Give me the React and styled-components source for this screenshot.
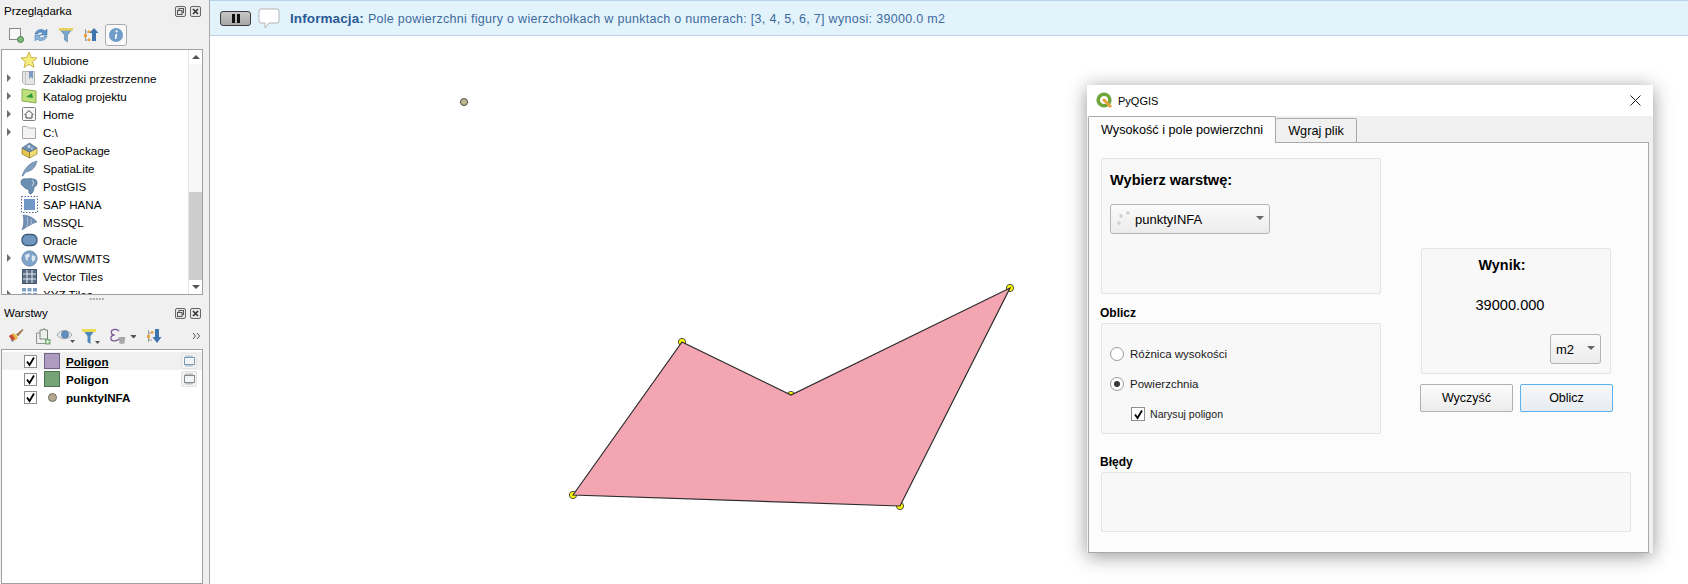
import React from 'react';
import styled, {createGlobalStyle} from "styled-components";

const Global = createGlobalStyle`
  html, body {
    margin: 0;
    padding: 0;
    background: #fff;
    overflow: hidden;
  }
  * {
    box-sizing: border-box;
  }
`;

const Page = styled.div`
  width: 1688px;
  height: 584px;
  display: flex;
  overflow: hidden;
  font-family: "Liberation Sans", Arial, sans-serif;
  font-size: 11.6px;
  color: #000;
`;

const Sidebar = styled.div`
  width: 210px;
  height: 100%;
  flex: none;
  display: flex;
  flex-direction: column;
  background: #f0f0f0;
  border-right: 1px solid #a9a9a9;
`;

const PanelHeader = styled.div`
  height: 21px;
  flex: none;
  padding: 1px 7px 0 4px;
  display: flex;
  align-items: center;
  justify-content: space-between;
  font-size: 11.5px;
`;

const HeaderButtons = styled.div`
  display: flex;
  gap: 4px;
  margin-right: 1px;
`;

const Toolbar = styled.div`
  height: ${p => p.$height}px;
  flex: none;
  padding-left: ${p => p.$left}px;
  display: flex;
  align-items: center;
  gap: ${p => p.$gap}px;
`;

const ToolButton = styled.div`
  width: ${p => p.$width || 22}px;
  height: 22px;
  flex: none;
  display: flex;
  align-items: center;
  justify-content: center;
  border-radius: 3px;
  background: ${p => p.$active ? "#fafafa" : "transparent"};
  border: 1px solid ${p => p.$active ? "#adadad" : "transparent"};
  margin-left: ${p => p.$push || 0}px;
`;

const Tree = styled.div`
  margin: 0 6px 0 1px;
  border: 1px solid #a0a0a0;
  background: #fff;
  position: relative;
  overflow: hidden;
  flex: ${p => p.$grow ? "1" : "none"};
  height: ${p => p.$height ? p.$height + "px" : "auto"};
  display: flex;
`;

const TreeList = styled.div`
  flex: 1;
  min-width: 0;
  padding-top: ${p => p.$top}px;
`;

const BrowserRow = styled.div`
  height: 18px;
  display: flex;
  align-items: center;
`;

const Arrow = styled.span`
  width: 0;
  height: 0;
  flex: none;
  margin: 0 9px 0 5px;
  border-left: 4px solid ${p => p.$hidden ? "transparent" : "#6d6d6d"};
  border-top: 4px solid transparent;
  border-bottom: 4px solid transparent;
`;

const RowIcon = styled.span`
  width: 18px;
  height: 18px;
  flex: none;
  display: flex;
  align-items: center;
  justify-content: center;
  margin-right: 5px;
`;

const Scrollbar = styled.div`
  width: 14px;
  flex: none;
  display: flex;
  flex-direction: column;
  background: #f4f4f4;
  border-left: 1px solid #e6e6e6;
`;

const ScrollButton = styled.div`
  height: 14px;
  flex: none;
  display: flex;
  align-items: center;
  justify-content: center;
  background: #fff;
  &::before {
    content: "";
    border-left: 4px solid transparent;
    border-right: 4px solid transparent;
    border-${p => p.$down ? "top" : "bottom"}: 4px solid #555;
  }
`;

const ScrollTrack = styled.div`
  flex: ${p => p.$grow};
  background: ${p => p.$thumb ? "#cdcdcd" : "#f7f7f7"};
`;

const Grip = styled.div`
  height: 7px;
  flex: none;
  display: flex;
  justify-content: center;
  align-items: center;
  padding-right: 15px;
  color: #a0a0a0;
  font-size: 7px;
  letter-spacing: 0.5px;
  line-height: 7px;
`;

const LayerRow = styled.div`
  height: 18px;
  display: flex;
  align-items: center;
  padding-left: 22px;
  background: ${p => p.$selected ? "#f0f0f0" : "transparent"};
  font-weight: bold;
`;

const Check = styled.span`
  width: 13px;
  height: 13px;
  flex: none;
  border: 1px solid #8f8f8f;
  background: #fff;
  display: flex;
  align-items: center;
  justify-content: center;
`;

const Swatch = styled.span`
  width: 16px;
  height: 16px;
  flex: none;
  margin-left: 7px;
  background: ${p => p.$color};
  border: 1px solid ${p => p.$edge};
`;

const PointDot = styled.span`
  width: 16px;
  height: 16px;
  flex: none;
  margin-left: 7px;
  display: flex;
  align-items: center;
  justify-content: center;
  &::before {
    content: "";
    width: 7px;
    height: 7px;
    border-radius: 50%;
    background: #b5a88c;
    border: 1px solid #6a6a5c;
  }
`;

const LayerName = styled.span`
  margin-left: 6px;
  flex: 1;
  text-decoration: ${p => p.$underline ? "underline" : "none"};
`;

const Indicator = styled.span`
  width: 16px;
  height: 16px;
  flex: none;
  margin-right: 5px;
  display: flex;
  align-items: center;
  justify-content: center;
  background: #f4f4f4;
  border: 1px solid #e2e2e2;
  border-radius: 2px;
`;

const Main = styled.div`
  flex: 1;
  min-width: 0;
  position: relative;
  display: flex;
  flex-direction: column;
`;

const MessageBar = styled.div`
  height: 36px;
  flex: none;
  display: flex;
  align-items: center;
  padding-left: 10px;
  background: #e3f3fc;
  border-top: 1px solid #b7d3e8;
  border-bottom: 1px solid #b7d3e8;
`;

const PauseButton = styled.div`
  width: 31px;
  height: 15px;
  flex: none;
  display: flex;
  align-items: center;
  justify-content: center;
  gap: 2px;
  background: linear-gradient(#c6c6c6, #a8a8a8);
  border: 1px solid #3c3c3c;
  border-radius: 3px;
  &::before, &::after {
    content: "";
    width: 3px;
    height: 9px;
    background: #111;
  }
`;

const MessageText = styled.div`
  margin-left: 10px;
  color: #3d6a9c;
  font-size: 12.5px;
  letter-spacing: 0.3px;
  white-space: nowrap;
  b {
    color: #2a5a94;
    font-size: 13.5px;
    letter-spacing: 0.1px;
    margin-right: 4px;
  }
`;

const Canvas = styled.div`
  flex: 1;
  background: #fff;
  position: relative;
`;

const Dialog = styled.div`
  position: absolute;
  left: 877px;
  top: 85px;
  width: 566px;
  height: 468px;
  display: flex;
  flex-direction: column;
  background: #f0f0f0;
  box-shadow: 0 3px 18px rgba(0, 0, 0, 0.42);
  font-size: 13px;
`;

const TitleBar = styled.div`
  height: 31px;
  flex: none;
  display: flex;
  align-items: center;
  padding: 0 11px 0 9px;
  background: #fff;
  font-size: 11px;
`;

const TitleText = styled.span`
  margin-left: 5px;
  flex: 1;
`;

const TabBar = styled.div`
  height: 27px;
  flex: none;
  display: flex;
  align-items: flex-end;
  margin: 0 4px 0 1px;
  border-bottom: 1px solid #a9a9a9;
`;

const Tab = styled.div`
  width: ${p => p.$width}px;
  height: ${p => p.$active ? 27 : 25}px;
  display: flex;
  align-items: center;
  justify-content: center;
  background: ${p => p.$active ? "#fcfcfc" : "#f0f0f0"};
  border: 1px solid #a9a9a9;
  border-bottom: ${p => p.$active ? "none" : "1px solid #a9a9a9"};
  border-left-width: ${p => p.$active ? 1 : 0}px;
  border-radius: 2px 2px 0 0;
  margin-bottom: -1px;
  position: relative;
  font-size: 12.7px;
`;

const Pane = styled.div`
  flex: 1;
  margin: 0 4px 0 1px;
  padding: 15px 17px 18px 12px;
  background: #fcfcfc;
  border: 1px solid #a9a9a9;
  border-top: none;
  display: flex;
  flex-direction: column;
`;

const TopRow = styled.div`
  display: flex;
  align-items: flex-start;
`;

const LeftColumn = styled.div`
  width: 280px;
  flex: none;
  display: flex;
  flex-direction: column;
`;

const RightColumn = styled.div`
  width: 193px;
  flex: none;
  margin: 90px 0 0 39px;
  display: flex;
  flex-direction: column;
`;

const GroupBox = styled.div`
  height: ${p => p.$height}px;
  flex: none;
  background: #f8f8f8;
  border: 1px solid #e4e4e4;
  border-radius: 2px;
`;

const LayerBox = styled(GroupBox)`
  padding: 11px 8px 0;
`;

const ChoiceBox = styled(GroupBox)`
  padding-top: 21px;
  display: flex;
  flex-direction: column;
  gap: 12px;
`;

const ChooseTitle = styled.div`
  font-size: 14.6px;
  font-weight: bold;
  height: 20px;
  line-height: 20px;
`;

const Combo = styled.div`
  width: ${p => p.$width}px;
  height: 30px;
  display: flex;
  align-items: center;
  margin-top: ${p => p.$top || 0}px;
  padding-left: 5px;
  background: linear-gradient(#fbfbfb, #ececec);
  border: 1px solid #b4b4b4;
  border-radius: 3px;
  position: relative;
  font-size: 13px;
  &::after {
    content: "";
    position: absolute;
    right: 5px;
    top: 11px;
    border-left: 4px solid transparent;
    border-right: 4px solid transparent;
    border-top: 4px solid #666;
  }
`;

const ComboLabel = styled.span`
  margin-left: 2px;
`;

const ComboWrap = styled.div`
  display: flex;
  justify-content: flex-end;
  margin-top: 19px;
  padding-right: 9px;
`;

const SectionLabel = styled.div`
  height: 16px;
  line-height: 16px;
  margin: ${p => p.$top}px 0 2px -1px;
  font-size: 12px;
  font-weight: bold;
`;

const ChoiceRow = styled.div`
  height: 18px;
  display: flex;
  align-items: center;
  padding-left: ${p => p.$indent}px;
  font-size: ${p => p.$size}px;
  color: #1a1a1a;
`;

const Radio = styled.span`
  width: 14px;
  height: 14px;
  flex: none;
  margin-right: 6px;
  border-radius: 50%;
  border: 1px solid #9a9a9a;
  background: #fff;
  display: flex;
  align-items: center;
  justify-content: center;
  &::before {
    content: "";
    width: 6px;
    height: 6px;
    border-radius: 50%;
    background: ${p => p.$on ? "#3a3a3a" : "transparent"};
  }
`;

const SmallCheck = styled(Check)`
  width: 14px;
  height: 14px;
  margin-right: 5px;
`;

const ResultBox = styled(GroupBox)`
  width: 190px;
  margin-left: 1px;
  padding-top: 7px;
`;

const ResultTitle = styled.div`
  height: 18px;
  line-height: 18px;
  padding-right: 28px;
  text-align: center;
  font-size: 14.4px;
  font-weight: bold;
`;

const ResultValue = styled.div`
  margin-top: 21px;
  height: 20px;
  line-height: 20px;
  padding-right: 12px;
  text-align: center;
  font-size: 14.6px;
`;

const Buttons = styled.div`
  margin-top: 10px;
  display: flex;
  gap: 7px;
`;

const Button = styled.div`
  width: 93px;
  height: 28px;
  display: flex;
  align-items: center;
  justify-content: center;
  font-size: 12.5px;
  border-radius: 2px;
  border: 1px solid ${p => p.$focus ? "#5cb2ee" : "#b0b0b0"};
  background: ${p => p.$focus ? "linear-gradient(#f7f9fb, #e6ebf0)" : "linear-gradient(#fcfcfc, #ececec)"};
`;

const ErrorBox = styled(GroupBox)`
  width: 530px;
`;

const CloseX = () => (
    <svg width="13" height="13" viewBox="0 0 13 13">
        <path d="M1.5 1.5 L11.5 11.5 M11.5 1.5 L1.5 11.5" stroke="#222" strokeWidth="1" fill="none"/>
    </svg>
);

const DockFloat = () => (
    <svg width="11" height="11" viewBox="0 0 11 11">
        <rect x=".5" y=".5" width="10" height="10" rx="1.5" fill="#e6e6e6" stroke="#666"/>
        <rect x="4" y="2.5" width="4.5" height="4" fill="none" stroke="#555"/>
        <rect x="2.5" y="4.5" width="4.5" height="4" fill="#e6e6e6" stroke="#555"/>
    </svg>
);

const DockClose = () => (
    <svg width="11" height="11" viewBox="0 0 11 11">
        <rect x=".5" y=".5" width="10" height="10" rx="1.5" fill="#e6e6e6" stroke="#666"/>
        <path d="M3 3 L8 8 M8 3 L3 8" stroke="#333" strokeWidth="1.6"/>
    </svg>
);

const HeaderTools = () => (
    <HeaderButtons>
        <DockFloat/>
        <DockClose/>
    </HeaderButtons>
);

const AddIcon = () => (
    <svg width="16" height="16" viewBox="0 0 16 16">
        <rect x="1.5" y="1.5" width="11" height="11" fill="#f8f8f8" stroke="#8a8a8a"/>
        <circle cx="12.5" cy="12.5" r="3" fill="#7fb87f" stroke="#4d7f4d"/>
    </svg>
);

const RefreshIcon = () => (
    <svg width="16" height="16" viewBox="0 0 16 16">
        <path d="M2 7 C3 2.5 9 1 12 4 L14 2 V8 H8 L10 6 C8.5 4.5 5.5 5 4.5 7 Z" fill="#5b92c8" stroke="#3e72a8" strokeWidth=".5"/>
        <path d="M14 9 C13 13.5 7 15 4 12 L2 14 V8 H8 L6 10 C7.5 11.5 10.5 11 11.5 9 Z" fill="#8ab4dc" stroke="#3e72a8" strokeWidth=".5"/>
    </svg>
);

const FilterIcon = () => (
    <svg width="16" height="16" viewBox="0 0 16 16">
        <path d="M1 1.5 H15 L9.5 8 V15 L6.5 13 V8 Z" fill="#7ba4c9" stroke="#5a86ad" strokeWidth=".6"/>
        <rect x="1" y="1" width="14" height="2.6" fill="#e9d25a"/>
    </svg>
);

const CollapseIcon = () => (
    <svg width="16" height="16" viewBox="0 0 16 16">
        <path d="M2.5 2 V14 M2.5 5 H6 M2.5 13 H6" stroke="#999" fill="none"/>
        <rect x="1" y="7" width="3" height="3" fill="#e8a33d"/>
        <rect x="5" y="3.5" width="2.5" height="2.5" fill="#e8a33d"/>
        <rect x="5" y="11.5" width="2.5" height="2.5" fill="#e8a33d"/>
        <path d="M11 1 L15.5 6 H13 V14 H9 V6 H6.5 Z" fill="#3f74ad"/>
    </svg>
);

const InfoIcon = () => (
    <svg width="16" height="16" viewBox="0 0 16 16">
        <circle cx="8" cy="8" r="7" fill="#6f9cc9"/>
        <circle cx="8.6" cy="4.4" r="1.1" fill="#fff"/>
        <path d="M7.4 7 H9.3 L8.4 12 H6.9 Z" fill="#fff"/>
    </svg>
);

const StarIcon = () => (
    <svg width="18" height="18" viewBox="0 0 18 18">
        <path d="M9 1 L11.3 6.5 L17 7 L12.6 10.7 L14 16.5 L9 13.4 L4 16.5 L5.4 10.7 L1 7 L6.7 6.5 Z" fill="#f6ec7f" stroke="#c9b64a"/>
    </svg>
);

const BookmarkIcon = () => (
    <svg width="16" height="16" viewBox="0 0 16 16">
        <path d="M1.5 1.5 H13.5 V14.5 H4 L1.5 12 Z" fill="#e5e5e5" stroke="#b5b5b5"/>
        <path d="M4.5 1.5 V14" stroke="#c4c4c4"/>
        <path d="M8 1 H12 V9 L10 7 L8 9 Z" fill="#7d9dc0"/>
    </svg>
);

const ProjectIcon = () => (
    <svg width="16" height="16" viewBox="0 0 16 16">
        <path d="M1 1 L15 3 V15 L1 13 Z" fill="#bfdf7a" stroke="#8cae58"/>
        <path d="M5 9 L11 5 L12 10 Z" fill="#2a9a3c"/>
    </svg>
);

const HomeIcon = () => (
    <svg width="16" height="16" viewBox="0 0 16 16">
        <rect x="1.5" y="1.5" width="13" height="13" rx="1" fill="#f7f7f7" stroke="#7f7f7f"/>
        <path d="M3.5 9 L8 4.5 L12.5 9 M5 8.5 V12 H11 V8.5" fill="none" stroke="#444"/>
    </svg>
);

const FolderIcon = () => (
    <svg width="16" height="16" viewBox="0 0 16 16">
        <path d="M1.5 2.5 H6 L7.5 4 H14.5 V14.5 H1.5 Z" fill="#f3f3f3" stroke="#a8a8a8"/>
    </svg>
);

const GeoPackageIcon = () => (
    <svg width="17" height="17" viewBox="0 0 17 17">
        <path d="M1 6 L8.5 10 V16 L1 12 Z" fill="#e3c44c" stroke="#7c6a24" strokeWidth=".6"/>
        <path d="M16 6 L8.5 10 V16 L16 12 Z" fill="#f3dc72" stroke="#7c6a24" strokeWidth=".6"/>
        <path d="M8.5 1 L16 6 L8.5 10 L1 6 Z" fill="#6f8fb3" stroke="#3f5c7f" strokeWidth=".6"/>
        <circle cx="8" cy="4.5" r="1.5" fill="#cfe0ee"/>
        <circle cx="11" cy="6.5" r="1" fill="#cfe0ee"/>
    </svg>
);

const FeatherIcon = () => (
    <svg width="17" height="17" viewBox="0 0 17 17">
        <path d="M1 16 C3 9 9 2 16 1 C15 6 12 11 5 12 C4 13 3 14 2 16 Z" fill="#7f9dbd" stroke="#4f6f92" strokeWidth=".5"/>
    </svg>
);

const ElephantIcon = () => (
    <svg width="18" height="17" viewBox="0 0 18 17">
        <path d="M1 4 C1 1 4 .5 6 1 C8 .5 11 0 13 1 C16 1 17.5 3 17 6 C16.5 8 15 9 14 9 C14 12 13 15 11 16 C9.5 16.5 8.5 15 9 12 C7 11 4 10 3 8 C1.5 7.5 1 6 1 4 Z" fill="#6d8fb3" stroke="#3f5f82" strokeWidth=".6"/>
        <path d="M12 2 C14 3 14 6 12 8" stroke="#dbe6f1" fill="none"/>
    </svg>
);

const HanaIcon = () => (
    <svg width="17" height="17" viewBox="0 0 17 17">
        <rect x=".5" y=".5" width="16" height="16" fill="none" stroke="#50688a" strokeDasharray="1.5 1.5"/>
        <rect x="3" y="3" width="11" height="11" fill="#6f98c6"/>
    </svg>
);

const MssqlIcon = () => (
    <svg width="17" height="17" viewBox="0 0 17 17">
        <path d="M2 1 C7 1 13 4 16 8 C12 9 7 12 1 16 C3 11 3 6 2 1 Z" fill="#6f8fb3" stroke="#4c6a8c" strokeWidth=".5"/>
        <path d="M6 3 C7 7 7 10 5.5 13 M10 5 C10.5 7 10.5 8.5 9.5 10.5" stroke="#cdddeb" fill="none" strokeWidth=".7"/>
    </svg>
);

const OracleIcon = () => (
    <svg width="17" height="14" viewBox="0 0 17 14">
        <rect x="1" y="1.5" width="15" height="11" rx="5" fill="#7096c0" stroke="#3d5878" strokeWidth="1.3"/>
    </svg>
);

const GlobeIcon = () => (
    <svg width="17" height="17" viewBox="0 0 17 17">
        <circle cx="8.5" cy="8.5" r="7.7" fill="#7fa3c9" stroke="#58799c" strokeWidth=".6"/>
        <path d="M4 5 L8 3.5 L9 6 L6.5 8 L7 11 L5 10 Z M11 5 L14.5 6.5 L14 10 L11.5 12 L10.5 8.5 Z" fill="#dfe9f3"/>
    </svg>
);

const VectorTilesIcon = () => (
    <svg width="15" height="15" viewBox="0 0 15 15">
        <rect x=".5" y=".5" width="14" height="14" fill="#5b6f87" stroke="#44566d"/>
        <path d="M5 1 V14 M10 1 V14 M1 5 H14 M1 10 H14" stroke="#e8edf2" strokeWidth="1"/>
    </svg>
);

const XyzTilesIcon = () => (
    <svg width="15" height="15" viewBox="0 0 15 15">
        <path d="M0 1 H4 V4.5 H0 Z M5.5 1 H9.5 V4.5 H5.5 Z M11 1 H15 V4.5 H11 Z M0 6 H4 V9.5 H0 Z M5.5 6 H9.5 V9.5 H5.5 Z M11 6 H15 V9.5 H11 Z" fill="#7f9fc4"/>
    </svg>
);

const BrushIcon = () => (
    <svg width="16" height="16" viewBox="0 0 16 16">
        <path d="M1 8 L6 5 L10 10 L6 13 Z" fill="#e9b23e"/>
        <path d="M1 8 L4 6.3 L7 11 L4 13 Z" fill="#c9483a"/>
        <path d="M3 11 L6 13 L4 14 Z" fill="#5d7fb0"/>
        <path d="M8 6.5 L14.5 1 L15.5 2 L10 8.5 Z" fill="#9c7a4c"/>
    </svg>
);

const AddGroupIcon = () => (
    <svg width="20" height="17" viewBox="-4 0 20 17">
        <path d="M5 5 H1.5 V15.5 H11 V12" fill="none" stroke="#8a9488"/>
        <path d="M5 2 H8 V1 H10 V2 H12.5 V11 H5 Z" fill="#eef0ee" stroke="#7a857a"/>
        <rect x="10" y="11" width="5.5" height="5.5" fill="#74b06f"/>
        <path d="M12.8 12 V15.5 M11 13.8 H14.5" stroke="#fff"/>
    </svg>
);

const EyeIcon = () => (
    <svg width="20" height="16" viewBox="0 0 20 16">
        <path d="M1 7 C5 1 12 1 16 7 C12 12 5 12 1 7 Z" fill="#e6e9ec" stroke="#9aa4ad"/>
        <circle cx="9" cy="6.5" r="3.5" fill="#5f8fc0" stroke="#41668c" strokeWidth=".6"/>
        <path d="M14 12 H19 L16.5 15 Z" fill="#555"/>
    </svg>
);

const FilterMenuIcon = () => (
    <svg width="20" height="17" viewBox="0 0 20 17">
        <path d="M1 1 H15 L9.5 8 V16 L6.5 14 V8 Z" fill="#4f86bb"/>
        <rect x="1" y="1" width="14" height="3" fill="#eadb55"/>
        <path d="M14 13 H19 L16.5 16 Z" fill="#555"/>
    </svg>
);

const EpsilonIcon = () => (
    <svg width="31" height="18" viewBox="-4 0 31 18">
        <path d="M9.5 4 C7 1 1.5 2 1.5 5 C1.5 7 3 8 5 8 C2.5 8 1 9 1 11.5 C1 14.5 7 15 9.5 12" fill="none" stroke="#7c5a96" strokeWidth="1.3"/>
        <path d="M9 10 H16 L15 17 H10 Z" fill="#a8a8a8"/>
        <path d="M21 8 H28 L24.5 11.5 Z" fill="#555"/>
    </svg>
);

const ExpandIcon = () => (
    <svg width="16" height="16" viewBox="0 0 16 16">
        <path d="M2.5 2 V14 M2.5 5 H6 M2.5 12 H6" stroke="#999" fill="none"/>
        <rect x="1" y="7" width="3" height="3" fill="#e8a33d"/>
        <rect x="5" y="3" width="2.5" height="2.5" fill="#e8a33d"/>
        <path d="M9 1 H13 V9 H15.5 L11 15 L6.5 9 H9 Z" fill="#3f74ad"/>
    </svg>
);

const MoreIcon = () => (
    <svg width="9" height="8" viewBox="0 0 9 8">
        <path d="M1 1 L3.5 4 L1 7 M5 1 L7.5 4 L5 7" fill="none" stroke="#555"/>
    </svg>
);

const MemoryIcon = ({color}) => (
    <svg width="13" height="12" viewBox="0 0 13 12">
        <rect x="1.5" y="2.5" width="10" height="7" fill="#f2f5f7" stroke={color}/>
        <path d="M3 .5 V2.5 M5 .5 V2.5 M7 .5 V2.5 M9 .5 V2.5 M3 9.5 V11.5 M5 9.5 V11.5 M7 9.5 V11.5 M9 9.5 V11.5" stroke={color}/>
    </svg>
);

const Tick = () => (
    <svg width="11" height="11" viewBox="0 0 11 11">
        <path d="M2 5.5 L4.5 9 L9 1.5" fill="none" stroke="#000" strokeWidth="1.8"/>
    </svg>
);

const SpeechIcon = () => (
    <svg width="22" height="21" viewBox="0 0 22 21" style={{marginLeft: 7, flex: "none"}}>
        <path d="M3 1 H19 Q21 1 21 3 V13 Q21 15 19 15 H11 L7 20 V15 H3 Q1 15 1 13 V3 Q1 1 3 1 Z" fill="#fff" stroke="#b4b4b4"/>
    </svg>
);

const QgisLogo = () => (
    <svg width="17" height="17" viewBox="0 0 17 17">
        <circle cx="8" cy="8" r="5.8" fill="none" stroke="#6fa53a" strokeWidth="3.6"/>
        <path d="M8 8 L15 15" stroke="#e6a33a" strokeWidth="3"/>
        <circle cx="8" cy="8" r="1.6" fill="#e6a33a"/>
    </svg>
);

const PointsIcon = () => (
    <svg width="17" height="16" viewBox="0 0 17 16">
        <circle cx="3" cy="12" r="1.3" fill="#e4e4e4" stroke="#aaa" strokeWidth=".5"/>
        <circle cx="5" cy="5" r="1.3" fill="#e4e4e4" stroke="#aaa" strokeWidth=".5"/>
        <circle cx="12" cy="2" r="1.3" fill="#e4e4e4" stroke="#aaa" strokeWidth=".5"/>
    </svg>
);

const browserItems = [
    {name: "Ulubione", icon: <StarIcon/>},
    {name: "Zakładki przestrzenne", icon: <BookmarkIcon/>, arrow: true},
    {name: "Katalog projektu", icon: <ProjectIcon/>, arrow: true},
    {name: "Home", icon: <HomeIcon/>, arrow: true},
    {name: "C:\\", icon: <FolderIcon/>, arrow: true},
    {name: "GeoPackage", icon: <GeoPackageIcon/>},
    {name: "SpatiaLite", icon: <FeatherIcon/>},
    {name: "PostGIS", icon: <ElephantIcon/>},
    {name: "SAP HANA", icon: <HanaIcon/>},
    {name: "MSSQL", icon: <MssqlIcon/>},
    {name: "Oracle", icon: <OracleIcon/>},
    {name: "WMS/WMTS", icon: <GlobeIcon/>, arrow: true},
    {name: "Vector Tiles", icon: <VectorTilesIcon/>},
    {name: "XYZ Tiles", icon: <XyzTilesIcon/>, arrow: true},
];

const vertices = [[573, 495], [682, 342], [791, 395], [1010, 288], [900, 506]];

// points lie under the polygon, so only a crescent of each one shows
const MapCanvas = () => (
    <svg width="1478" height="548" viewBox="210 36 1478 548" style={{display: "block"}}>
        {vertices.map(([x, y]) => (
            <circle key={x} cx={x} cy={y} r="3.6" fill="#ffff00" stroke="#4a4a4a" strokeWidth="1"/>
        ))}
        <polygon points={vertices.map(v => v.join(",")).join(" ")} fill="#f4a5b2" stroke="#2c2c2c" strokeWidth="1.2"/>
        <circle cx="464" cy="102" r="3.5" fill="#bdb794" stroke="#4a4a40" strokeWidth="1"/>
    </svg>
);

const App = () => {
    return (
        <Page>
            <Global/>
            <Sidebar>
                <PanelHeader>
                    <span>Przeglądarka</span>
                    <HeaderTools/>
                </PanelHeader>
                <Toolbar $height={28} $left={5} $gap={3}>
                    <ToolButton><AddIcon/></ToolButton>
                    <ToolButton><RefreshIcon/></ToolButton>
                    <ToolButton><FilterIcon/></ToolButton>
                    <ToolButton><CollapseIcon/></ToolButton>
                    <ToolButton $active><InfoIcon/></ToolButton>
                </Toolbar>
                <Tree $height={246}>
                    <TreeList $top={1}>
                        {browserItems.map(item => (
                            <BrowserRow key={item.name}>
                                <Arrow $hidden={!item.arrow}/>
                                <RowIcon>{item.icon}</RowIcon>
                                <span>{item.name}</span>
                            </BrowserRow>
                        ))}
                    </TreeList>
                    <Scrollbar>
                        <ScrollButton/>
                        <ScrollTrack $grow={127}/>
                        <ScrollTrack $grow={88} $thumb/>
                        <ScrollButton $down/>
                    </Scrollbar>
                </Tree>
                <Grip>•••••</Grip>
                <PanelHeader>
                    <span>Warstwy</span>
                    <HeaderTools/>
                </PanelHeader>
                <Toolbar $height={26} $left={5} $gap={3}>
                    <ToolButton><BrushIcon/></ToolButton>
                    <ToolButton><AddGroupIcon/></ToolButton>
                    <ToolButton><EyeIcon/></ToolButton>
                    <ToolButton><FilterMenuIcon/></ToolButton>
                    <ToolButton $width={32}><EpsilonIcon/></ToolButton>
                    <ToolButton $push={3}><ExpandIcon/></ToolButton>
                    <ToolButton $push={17}><MoreIcon/></ToolButton>
                </Toolbar>
                <Tree $grow>
                    <TreeList $top={2}>
                        <LayerRow $selected>
                            <Check><Tick/></Check>
                            <Swatch $color="#ad9cc0" $edge="#6f6487"/>
                            <LayerName $underline>Poligon</LayerName>
                            <Indicator><MemoryIcon color="#7f9db5"/></Indicator>
                        </LayerRow>
                        <LayerRow>
                            <Check><Tick/></Check>
                            <Swatch $color="#74a476" $edge="#4e7050"/>
                            <LayerName>Poligon</LayerName>
                            <Indicator><MemoryIcon color="#8a8a8a"/></Indicator>
                        </LayerRow>
                        <LayerRow>
                            <Check><Tick/></Check>
                            <PointDot/>
                            <LayerName>punktyINFA</LayerName>
                        </LayerRow>
                    </TreeList>
                </Tree>
            </Sidebar>
            <Main>
                <MessageBar>
                    <PauseButton/>
                    <SpeechIcon/>
                    <MessageText>
                        <b>Informacja:</b>
                        Pole powierzchni figury o wierzchołkach w punktach o numerach: [3, 4, 5, 6, 7] wynosi: 39000.0 m2
                    </MessageText>
                </MessageBar>
                <Canvas>
                    <MapCanvas/>
                </Canvas>
                <Dialog>
                    <TitleBar>
                        <QgisLogo/>
                        <TitleText>PyQGIS</TitleText>
                        <CloseX/>
                    </TitleBar>
                    <TabBar>
                        <Tab $active $width={188}>Wysokość i pole powierzchni</Tab>
                        <Tab $width={81}>Wgraj plik</Tab>
                    </TabBar>
                    <Pane>
                        <TopRow>
                            <LeftColumn>
                                <LayerBox $height={136}>
                                    <ChooseTitle>Wybierz warstwę:</ChooseTitle>
                                    <Combo $width={160} $top={14}>
                                        <PointsIcon/>
                                        <ComboLabel>punktyINFA</ComboLabel>
                                    </Combo>
                                </LayerBox>
                                <SectionLabel $top={11}>Oblicz</SectionLabel>
                                <ChoiceBox $height={111}>
                                    <ChoiceRow $indent={8} $size={11.5}>
                                        <Radio/>
                                        Różnica wysokości
                                    </ChoiceRow>
                                    <ChoiceRow $indent={8} $size={11.5}>
                                        <Radio $on/>
                                        Powierzchnia
                                    </ChoiceRow>
                                    <ChoiceRow $indent={29} $size={10.6}>
                                        <SmallCheck><Tick/></SmallCheck>
                                        Narysuj poligon
                                    </ChoiceRow>
                                </ChoiceBox>
                            </LeftColumn>
                            <RightColumn>
                                <ResultBox $height={126}>
                                    <ResultTitle>Wynik:</ResultTitle>
                                    <ResultValue>39000.000</ResultValue>
                                    <ComboWrap>
                                        <Combo $width={51}>m2</Combo>
                                    </ComboWrap>
                                </ResultBox>
                                <Buttons>
                                    <Button>Wyczyść</Button>
                                    <Button $focus>Oblicz</Button>
                                </Buttons>
                            </RightColumn>
                        </TopRow>
                        <SectionLabel $top={20}>Błędy</SectionLabel>
                        <ErrorBox $height={60}/>
                    </Pane>
                </Dialog>
            </Main>
        </Page>
    );
};

export default App;
